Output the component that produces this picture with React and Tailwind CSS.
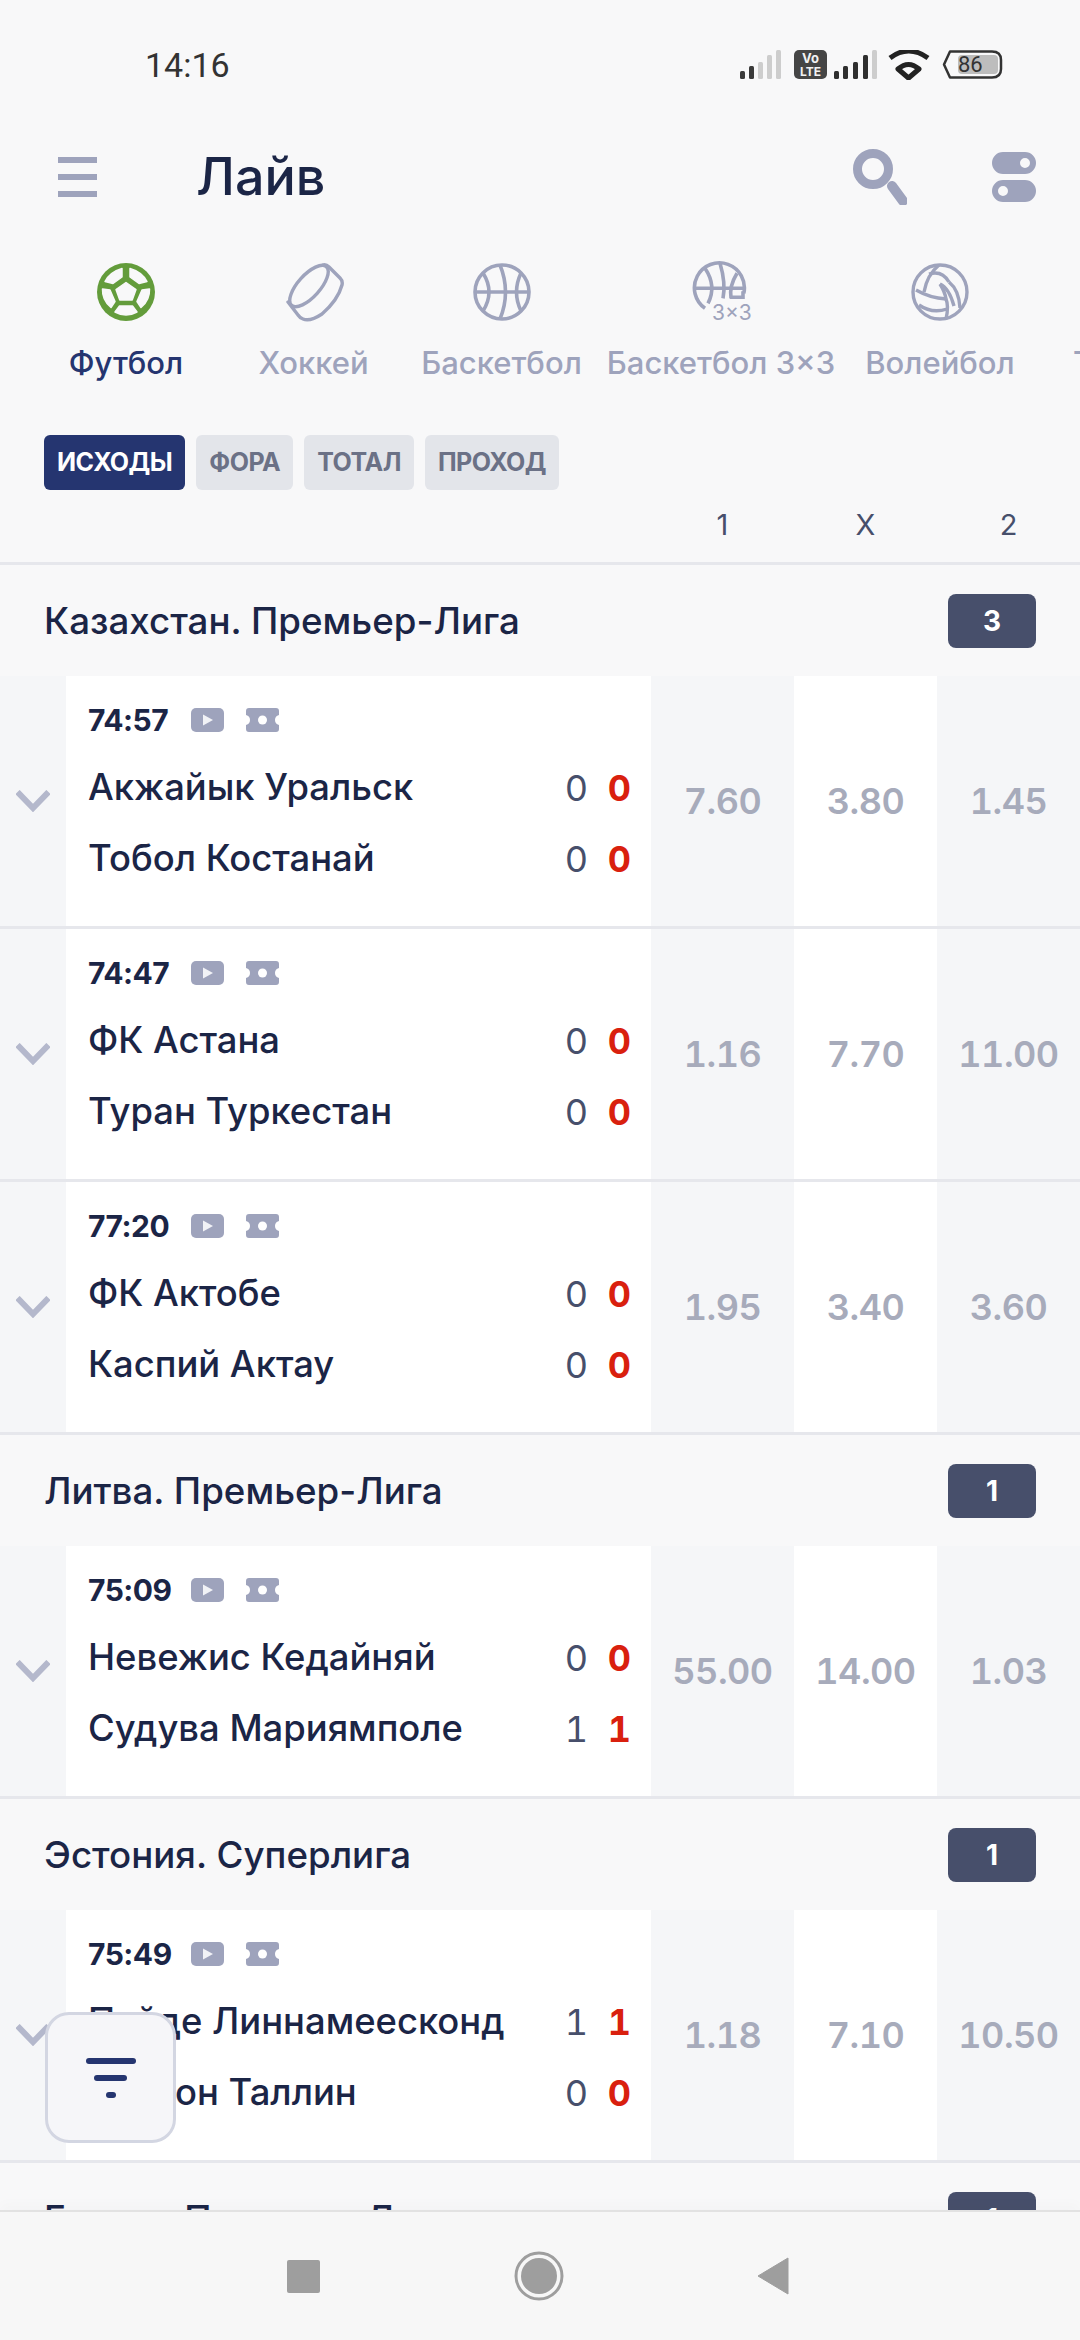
import React from "react";

const sections = [
	{
		name: "Казахстан. Премьер-Лига",
		count: 3,
		matches: [
			{ time: "74:57", home: "Акжайык Уральск", away: "Тобол Костанай", s1: "0", s2: "0", odds: ["7.60", "3.80", "1.45"] },
			{ time: "74:47", home: "ФК Астана", away: "Туран Туркестан", s1: "0", s2: "0", odds: ["1.16", "7.70", "11.00"] },
			{ time: "77:20", home: "ФК Актобе", away: "Каспий Актау", s1: "0", s2: "0", odds: ["1.95", "3.40", "3.60"] },
		],
	},
	{
		name: "Литва. Премьер-Лига",
		count: 1,
		matches: [
			{ time: "75:09", home: "Невежис Кедайняй", away: "Судува Мариямполе", s1: "0", s2: "1", odds: ["55.00", "14.00", "1.03"] },
		],
	},
	{
		name: "Эстония. Суперлига",
		count: 1,
		matches: [
			{ time: "75:49", home: "Пайде Линнамеесконд", away: "Легион Таллин", s1: "1", s2: "0", odds: ["1.18", "7.10", "10.50"] },
		],
	},
	{ name: "Египет. Премьер-Лига", count: 1, matches: [] },
];

const SoccerIcon = () => (
	<svg width="58" height="58" viewBox="-29 -29 58 58">
		<circle r="29" fill="#639c3b" />
		<g fill="#f8f8f9" stroke="#f8f8f9" strokeWidth="1.5" strokeLinejoin="round">
			<path d="M0 -9.5L10 -2.5L6.2 8H-6.2L-10 -2.5Z" />
			<path d="M-4 -23.5V-15L-13 -8.5L-21 -10.5Q-16 -20 -4 -23.5Z" />
			<path d="M4 -23.5V-15L13 -8.5L21 -10.5Q16 -20 4 -23.5Z" />
			<path d="M-23.5 -3L-16 -2L-11 9.5L-15 15.5Q-24 8 -23.5 -3Z" />
			<path d="M23.5 -3L16 -2L11 9.5L15 15.5Q24 8 23.5 -3Z" />
			<path d="M-6.5 14H6.5L11 20Q0 26 -11 20Z" />
		</g>
	</svg>
);

const PuckIcon = () => (
	<svg width="60" height="60" viewBox="-30 -30 60 60" fill="none" stroke="#9ea3bc" strokeWidth="3.4" strokeLinejoin="round" strokeLinecap="round">
		<ellipse cx="-5" cy="-6" rx="26" ry="11" transform="rotate(-48 -5 -6)" />
		<path d="M9 -27Q12 -28 15 -25L26 -14Q29 -11 28 -7Q24 8 8 22Q-4 30 -11 27Q-14 26 -16 23L-26 10" />
	</svg>
);

const BasketIcon = () => (
	<svg width="58" height="58" viewBox="-29 -29 58 58" fill="none" stroke="#9ea3bc" strokeWidth="3.6">
		<circle r="27" />
		<path d="M-27 0H27" />
		<path d="M-2 -27Q9 0 -2 27" />
		<path d="M-19 -19Q-7 0 -19 19" />
		<path d="M19 -19Q10 0 19 19" />
	</svg>
);

const Basket3Icon = () => (
	<svg width="62" height="64" viewBox="-29 -32 62 64" fill="none" stroke="#9ea3bc" strokeWidth="3.6">
		<g transform="translate(0 -3.7)">
			<path d="M-14 20A25 25 0 1 1 24.8 5" />
			<path d="M-25 0H24" />
			<path d="M1 -25Q7 -5 4 10" />
			<path d="M-14 -20Q-2 -2 -11 15" />
			<path d="M18 -15Q10 -2 12 10" />
			<path d="M24 3V9H11" />
		</g>
		<text x="-7" y="28" fill="#9ea3bc" stroke="none" fontSize="21" fontFamily="Inter, sans-serif">3×3</text>
	</svg>
);

const VolleyIcon = () => (
	<svg width="58" height="58" viewBox="-29 -29 58 58" fill="none" stroke="#9ea3bc" strokeWidth="3.4">
		<circle r="27" />
		<path d="M-1 -27Q-13 -17 -16 0" />
		<path d="M-11 -18Q2 -22 9 -10" />
		<path d="M0 -8Q5 0 6 7" />
		<path d="M-24 -2Q-10 6 6 7" />
		<path d="M-21 13Q-8 22 7 17" />
		<path d="M6 7Q9 14 6 27" />
		<path d="M9 -10Q19 -2 20 16" />
		<path d="M0 -8Q9 -4 14 14" />
	</svg>
);

const sports = [
	{ label: "Футбол", icon: <SoccerIcon />, active: true, width: "w-[188px]" },
	{ label: "Хоккей", icon: <PuckIcon />, width: "w-[187px]" },
	{ label: "Баскетбол", icon: <BasketIcon />, width: "w-[189px]" },
	{ label: "Баскетбол 3×3", icon: <Basket3Icon />, width: "w-[250px]" },
	{ label: "Волейбол", icon: <VolleyIcon />, width: "w-[188px]" },
	{ label: "Теннис", icon: null, width: "w-[188px]" },
];

const StatusIcons = () => (
	<svg width="263" height="30" viewBox="740 50 263 30">
		<g fill="#3a3a3a">
			<rect x="740" y="71" width="5" height="8" rx="1.5" />
			<rect x="749" y="66" width="5" height="13" rx="1.5" />
		</g>
		<g fill="#cdcdcd">
			<rect x="758" y="62" width="5" height="17" rx="1.5" />
			<rect x="767" y="55" width="5" height="24" rx="1.5" />
			<rect x="776" y="50" width="5" height="29" rx="1.5" />
		</g>
		<rect x="794" y="50" width="33" height="29" rx="5" fill="#454545" />
		<text x="810.5" y="63" textAnchor="middle" fill="#f2f2f2" fontSize="13" fontWeight="700" fontFamily="Inter, sans-serif">Vo</text>
		<text x="810.5" y="76" textAnchor="middle" fill="#f2f2f2" fontSize="12" fontWeight="700" fontFamily="Inter, sans-serif">LTE</text>
		<g fill="#2f2f2f">
			<rect x="834" y="71" width="5" height="8" rx="1.5" />
			<rect x="843" y="66" width="5" height="13" rx="1.5" />
			<rect x="853" y="62" width="5" height="17" rx="1.5" />
			<rect x="863" y="55" width="5" height="24" rx="1.5" />
		</g>
		<rect x="872" y="50" width="5" height="29" rx="1.5" fill="#cdcdcd" />
		<path d="M890 58Q908.5 44 928 58" fill="none" stroke="#222" strokeWidth="5" />
		<path d="M898 69Q908.5 60 919 69L908.5 78Z" fill="none" stroke="#222" strokeWidth="5" strokeLinejoin="round" />
		<path d="M950 51.5H992Q1001 51.5 1001 60V69Q1001 77.5 992 77.5H950L944 64.5Z" fill="none" stroke="#333" strokeWidth="2.5" strokeLinejoin="round" />
		<rect x="958" y="55" width="40" height="19" rx="4" fill="#bdbdbd" />
		<text x="958" y="72" fill="#333" fontSize="22" fontFamily="Roboto, sans-serif">86</text>
	</svg>
);

const TeamLine = ({ name, score, className = "" }) => (
	<div className={`h-[71px] flex items-center ${className}`}>
		<span className="flex-1 text-[36.4px] font-medium text-[#1b2546] whitespace-nowrap">{name}</span>
		<span className="w-[43px] text-center text-[36px] text-[#474f6b] tabular-nums">{score}</span>
		<span className="w-[43px] text-center text-[36px] font-bold text-[#d9200e] tabular-nums">{score}</span>
	</div>
);

const Match = ({ match }) => (
	<div className="flex h-[253px] bg-[#f5f6f8] border-b-[3px] border-[#e6e7ec]">
		<div className="w-[66px] flex items-center justify-center">
			<svg width="34" height="22" viewBox="0 0 34 22" fill="none" stroke="#b4b8cc" strokeWidth="6">
				<path d="M1.5 2L17 18L32.5 2" />
			</svg>
		</div>
		<div className="w-[585px] bg-white pl-[22px] pr-[10px]">
			<div className="h-[48px] mt-[20px] flex items-center">
				<span className="w-[103px] text-[30px] font-bold text-[#1b2546] tracking-[-0.5px]">{match.time}</span>
				<svg width="33" height="24" viewBox="0 0 33 24">
					<rect width="33" height="24" rx="5" fill="#9ea3bc" />
					<path d="M12 6.5L22 12L12 17.5Z" fill="#f1f2f6" />
				</svg>
				<svg className="ml-[22px]" width="33" height="24" viewBox="0 0 33 24">
					<path d="M3 0H30Q33 0 33 3V7Q29 8 29 12Q29 16 33 17V21Q33 24 30 24H3Q0 24 0 21V17Q4 16 4 12Q4 8 0 7V3Q0 0 3 0Z" fill="#9ea3bc" />
					<circle cx="16.5" cy="12" r="4.5" fill="#fff" />
				</svg>
			</div>
			<TeamLine className="mt-[8px]" name={match.home} score={match.s1} />
			<TeamLine name={match.away} score={match.s2} />
		</div>
		{match.odds.map((odd, i) => (
			<div
				key={i}
				className={`w-[143px] flex items-center justify-center text-[36px] font-semibold text-[#a7abbb] tracking-[-0.5px] tabular-nums ${i === 1 ? "bg-white" : ""}`}
			>
				{odd}
			</div>
		))}
	</div>
);

export default function App() {
	return (
		<div className="relative w-[1080px] h-[2340px] overflow-hidden flex flex-col bg-[#f8f8f9] font-['Inter',sans-serif]">
			<div className="flex-1 overflow-hidden">
				{/* status bar */}
				<div className="h-[130px] flex items-center justify-between pl-[145px] pr-[77px]">
					<span className="text-[34px] text-[#333] font-['Roboto',sans-serif]">14:16</span>
					<StatusIcons />
				</div>

				{/* title */}
				<div className="h-[94px] flex items-center pl-[58px] pr-[44px]">
					<div className="w-[39px] flex flex-col gap-[11px]">
						<div className="h-[6px] bg-[#9ea3bc]" />
						<div className="h-[6px] bg-[#9ea3bc]" />
						<div className="h-[6px] bg-[#9ea3bc]" />
					</div>
					<h1 className="ml-[99px] flex-1 text-[52px] font-medium text-[#1b2546]">Лайв</h1>
					<svg width="54" height="56" viewBox="0 0 54 56" fill="none">
						<circle cx="20" cy="20" r="15.5" stroke="#9ea3bc" strokeWidth="9" />
						<path d="M39 37L50 52" stroke="#9ea3bc" strokeWidth="10" strokeLinecap="round" />
					</svg>
					<svg className="ml-[85px]" width="44" height="50" viewBox="0 0 44 50" fillRule="evenodd">
						<path d="M11 0H33A11 11 0 0 1 33 22H11A11 11 0 0 1 11 0ZM33 6A5 5 0 1 0 33 16A5 5 0 1 0 33 6Z" fill="#9ea3bc" />
						<path d="M11 28H33A11 11 0 0 1 33 50H11A11 11 0 0 1 11 28ZM11 34A5 5 0 1 0 11 44A5 5 0 1 0 11 34Z" fill="#9ea3bc" />
					</svg>
				</div>

				{/* sports */}
				<div className="h-[211px] pt-[38px] pl-[32px] flex overflow-hidden">
					{sports.map((s) => (
						<div key={s.label} className={`${s.width} shrink-0 flex flex-col items-center`}>
							<div className="h-[60px] flex items-center justify-center">{s.icon}</div>
							<span className={`mt-[18px] text-[31px] font-medium whitespace-nowrap ${s.active ? "text-[#253570]" : "text-[#9ea3bc]"}`}>
								{s.label}
							</span>
						</div>
					))}
				</div>

				{/* market tabs */}
				<div className="flex gap-[11px] pl-[44px]">
					{["ИСХОДЫ", "ФОРА", "ТОТАЛ", "ПРОХОД"].map((t, i) => (
						<div
							key={t}
							className={`h-[55px] px-[13px] rounded-[6px] flex items-center text-[25px] font-bold tracking-[-0.5px] ${i === 0 ? "bg-[#253570] text-white" : "bg-[#e3e5ea] text-[#6b7186]"}`}
						>
							{t}
						</div>
					))}
				</div>

				{/* columns */}
				<div className="h-[75px] flex justify-end border-b-[3px] border-[#e6e7ec]">
					{["1", "X", "2"].map((c) => (
						<div key={c} className="w-[143px] h-[70px] flex items-center justify-center text-[29px] text-[#474f6b]">{c}</div>
					))}
				</div>

				{sections.map((sec) => (
					<div key={sec.name}>
						<div className="h-[111px] flex items-center justify-between pl-[44px] pr-[44px]">
							<span className="text-[36.7px] font-medium text-[#1b2546]">{sec.name}</span>
							<div className="w-[88px] h-[54px] rounded-[8px] bg-[#474f6b] flex items-center justify-center text-[28px] font-bold text-white">
								{sec.count}
							</div>
						</div>
						{sec.matches.map((m) => (
							<Match key={m.time} match={m} />
						))}
					</div>
				))}
			</div>

			{/* nav bar */}
			<div className="relative h-[130px] shrink-0 bg-[#f7f7f7] border-t-2 border-[#e2e2e2] shadow-[0_-6px_12px_rgba(0,0,0,0.02)] flex items-center justify-between pl-[287px] pr-[291px]">
				<div className="w-[33px] h-[33px] rounded-[2px] bg-[#9e9e9e]" />
				<svg width="50" height="50" viewBox="0 0 50 50">
					<circle cx="25" cy="25" r="23" fill="none" stroke="#9e9e9e" strokeWidth="3" />
					<circle cx="25" cy="25" r="18" fill="#9e9e9e" />
				</svg>
				<svg width="32" height="38" viewBox="0 0 32 38">
					<path d="M31 1V37L1 19Z" fill="#9e9e9e" stroke="#9e9e9e" strokeWidth="1" strokeLinejoin="round" />
				</svg>
			</div>

			{/* filter button */}
			<div className="absolute left-[45px] top-[2012px] w-[131px] h-[131px] rounded-[24px] bg-[#f6f6f9] border-[3px] border-[#d3d6e2] flex flex-col items-center justify-center gap-[11px]">
				<div className="w-[50px] h-[6px] rounded-full bg-[#253570]" />
				<div className="w-[33px] h-[6px] rounded-full bg-[#253570]" />
				<div className="w-[10px] h-[6px] rounded-full bg-[#253570]" />
			</div>
		</div>
	);
}
